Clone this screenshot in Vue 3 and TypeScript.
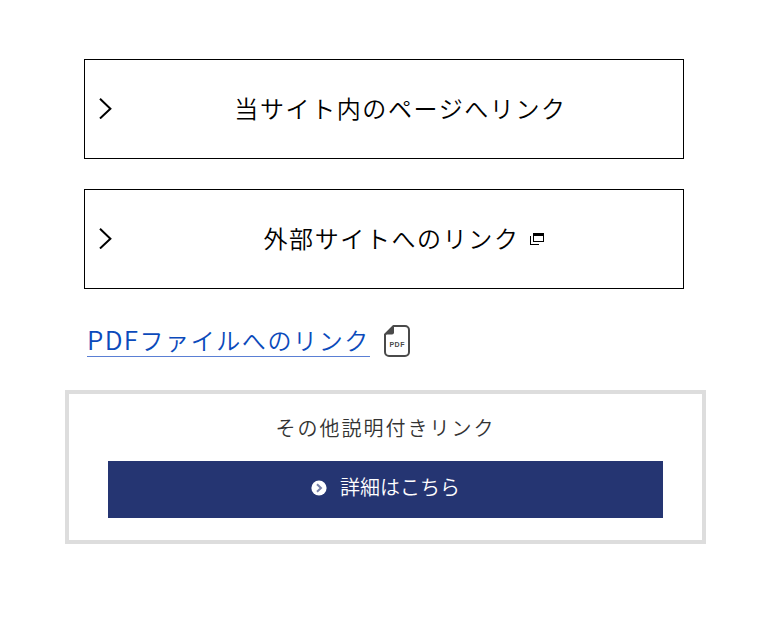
<script setup lang="ts">
interface BoxLink {
  label: string
  external: boolean
}

const boxLinks: BoxLink[] = [
  { label: '当サイト内のページへリンク', external: false },
  { label: '外部サイトへのリンク', external: true },
]
</script>

<template>
  <main class="page">
    <a v-for="link in boxLinks" :key="link.label" class="box-link">
      <svg class="chevron" width="14" height="22" viewBox="0 0 14 22" aria-hidden="true">
        <path d="M1 1.7 11.4 11.7 1 21.5" fill="none" stroke="#000" stroke-width="2" />
      </svg>
      <span class="box-body">
        <span class="box-label">{{ link.label }}</span>
        <svg v-if="link.external" class="external" width="14" height="12" viewBox="0 0 14 12" aria-hidden="true">
          <path d="M3 0h11v9H3zM4 3v5h9V3z" fill="#000" fill-rule="evenodd" />
          <path d="M0 3h1v8h8v1H0z" fill="#000" />
        </svg>
      </span>
    </a>

    <div class="pdf-row">
      <a class="pdf-link"><span class="latin">PDF</span>ファイルへのリンク</a>
      <svg class="pdf-icon" width="26" height="32" viewBox="0 0 26 32" aria-hidden="true">
        <path d="M9.5 1H21a4 4 0 0 1 4 4v22a4 4 0 0 1-4 4H5a4 4 0 0 1-4-4V9.5z" fill="#fff" stroke="#4a4a4a" stroke-width="2" stroke-linejoin="round" />
        <path d="M9.5 1 1 9.5h7a2 2 0 0 0 2-2V1z" fill="#4a4a4a" />
        <text x="13.2" y="21.5" text-anchor="middle" class="pdf-text">PDF</text>
      </svg>
    </div>

    <section class="panel">
      <p class="panel-title">その他説明付きリンク</p>
      <a class="button">
        <svg class="button-icon" width="16" height="16" viewBox="0 0 16 16" aria-hidden="true">
          <circle cx="8" cy="8" r="7.6" fill="#fff" />
          <path d="M6 4.2 10 8l-4 3.8" fill="none" stroke="#7780a8" stroke-width="2" />
        </svg>
        <span class="button-label">詳細はこちら</span>
      </a>
    </section>
  </main>
</template>

<style>
body {
  background: #fff;
}
</style>

<style scoped>
.page {
  box-sizing: border-box;
  height: 626px;
  padding: 59px 62px 0 65px;
  font-family: "Noto Sans CJK JP", sans-serif;
  font-weight: 350;
  color: #000;
}

.box-link {
  box-sizing: border-box;
  display: flex;
  align-items: center;
  width: 600px;
  height: 100px;
  margin: 0 0 30px 19px;
  padding: 0 15px 2px 14px;
  border: 1px solid #000;
}

.chevron {
  flex: none;
}

.box-body {
  display: flex;
  flex: 1;
  align-items: center;
  justify-content: center;
  padding-left: 20px;
}

.box-label {
  font-size: 24px;
  line-height: 36px;
  letter-spacing: 1.6px;
  white-space: nowrap;
}

.external {
  margin: 2px -6px 0 10px;
}

.pdf-row {
  display: flex;
  align-items: flex-start;
  height: 71px;
  padding: 6px 0 0 22px;
  box-sizing: border-box;
}

.pdf-link {
  height: 31px;
  border-bottom: 1px solid #5a7fd4;
  color: #0b4abb;
  font-size: 24px;
  line-height: 27px;
  letter-spacing: 1.6px;
  white-space: nowrap;
}

.latin {
  font-size: 26px;
  font-weight: 350;
  letter-spacing: 1.4px;
}

.pdf-icon {
  margin-left: 14px;
}

.pdf-text {
  fill: #4a4a4a;
  font: bold 7px "Liberation Sans", sans-serif;
  letter-spacing: 0.5px;
}

.panel {
  box-sizing: border-box;
  width: 641px;
  height: 154px;
  padding: 18px 39px 0;
  border: 4px solid #ddd;
}

.panel-title {
  margin: 0;
  height: 49px;
  color: #333;
  font-size: 20px;
  line-height: 32px;
  letter-spacing: 2px;
  text-align: center;
}

.button {
  display: flex;
  align-items: center;
  justify-content: center;
  gap: 13px;
  box-sizing: border-box;
  height: 57px;
  padding-bottom: 4px;
  background: #253572;
  color: #fff;
  font-size: 20px;
}

.button-label {
  padding-bottom: 2px;
}
</style>
